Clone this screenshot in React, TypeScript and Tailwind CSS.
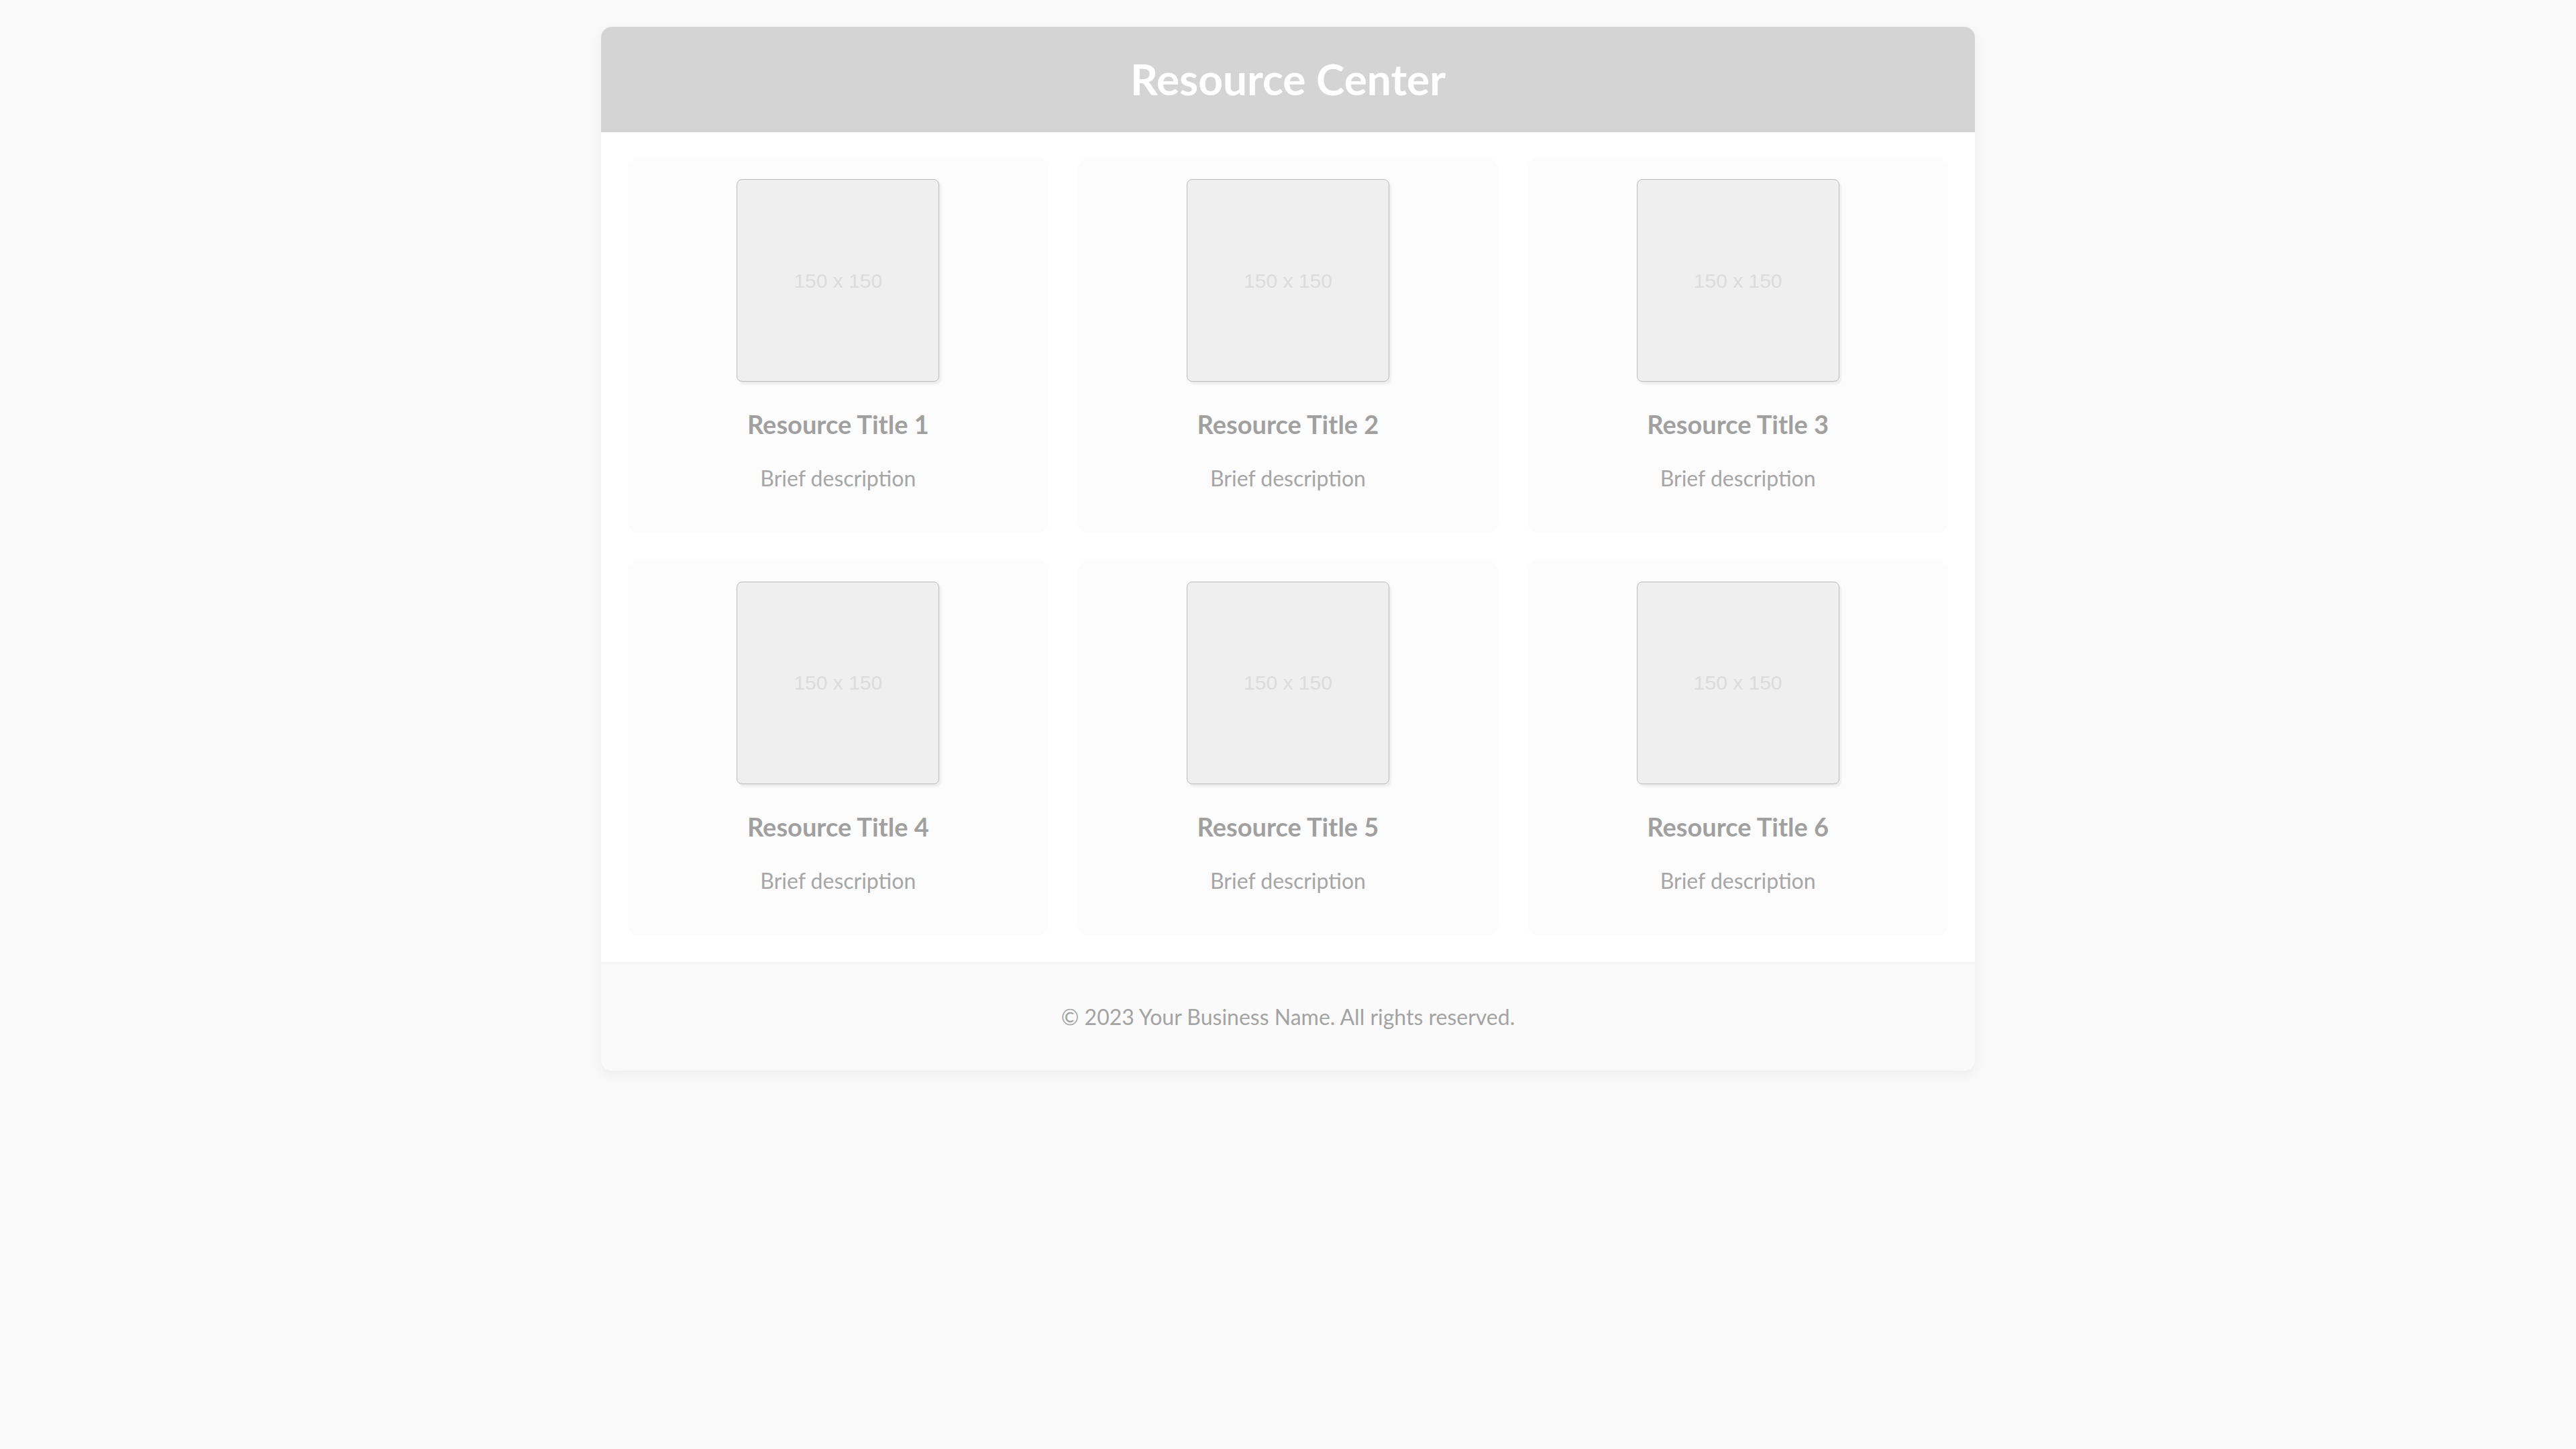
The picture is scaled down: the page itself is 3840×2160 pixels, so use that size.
const resources = [1, 2, 3, 4, 5, 6].map((n) => ({
  id: n,
  title: `Resource Title ${n}`,
  description: "Brief description",
}));

function Placeholder() {
  return (
    <div className="flex h-[302px] w-[302px] items-center justify-center rounded-lg border border-[#bcbcbc] bg-[#efefef] shadow-[3px_4px_3px_rgba(0,0,0,0.06)]">
      <span className="font-['Liberation_Sans',Arial,sans-serif] text-[30px] text-[#dcdcdc]">150 x 150</span>
    </div>
  );
}

function ResourceCard({ title, description }: { title: string; description: string }) {
  return (
    <div className="flex flex-col items-center rounded-2xl bg-[#fcfcfc] pt-8 pb-[63px]">
      <Placeholder />
      <h3 className="mt-[41px] text-[38px] leading-[1.2] font-bold text-[#a0a0a0]">{title}</h3>
      <p className="mt-[38px] text-[32px] leading-[1.2] text-[#a6a6a6]">{description}</p>
    </div>
  );
}

export default function App() {
  return (
    <div className="min-h-screen bg-[#f9f9f9] pt-10 font-['Lato','Noto_Sans',sans-serif]">
      <div className="mx-auto w-[2048px] rounded-2xl bg-white shadow-[0_6px_18px_rgba(0,0,0,0.05)]">
        <header className="flex h-[157px] items-center justify-center rounded-t-2xl bg-[#d4d4d4]">
          <h1 className="text-[64px] leading-[1.2] font-bold text-white">Resource Center</h1>
        </header>

        <main className="grid grid-cols-3 gap-x-[44px] gap-y-10 border-b border-[#ececec] px-10 pt-[38px] pb-10">
          {resources.map((r) => (
            <ResourceCard key={r.id} title={r.title} description={r.description} />
          ))}
        </main>

        <footer className="flex h-[160px] items-center justify-center rounded-b-2xl bg-[#fafafa]">
          <p className="text-[32px] leading-[1.2] text-[#a3a3a3]">© 2023 Your Business Name. All rights reserved.</p>
        </footer>
      </div>
    </div>
  );
}
